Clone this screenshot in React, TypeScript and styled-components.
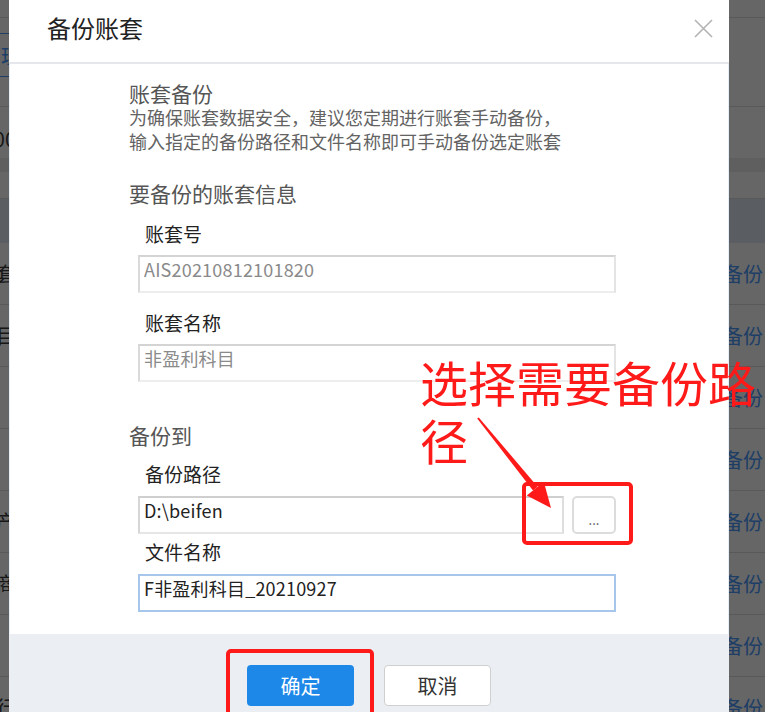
import React from "react";
import styled, { createGlobalStyle } from "styled-components";

const GlobalStyle = createGlobalStyle`
  html, body { margin: 0; padding: 0; overflow: hidden; }
  body {
    font-family: "Noto Sans CJK SC", "Noto Sans", sans-serif;
    background: #fff;
  }
  * { box-sizing: border-box; }
`;

/* ---------- background page ---------- */
const Page = styled.div`
  width: 765px;
  height: 712px;
  overflow: hidden;
  display: flex;
  flex-direction: column;
  background: #fff;
  color: #333;
  font-size: 20px;
`;

const TopStrip = styled.div`
  flex-shrink: 0;
  height: 18px;
  border-bottom: 1px solid #dedede;
`;

const NavRow = styled.div`
  flex-shrink: 0;
  height: 89px;
  padding-top: 15px;
  border-bottom: 1px solid #dedede;
  display: flex;
  align-items: flex-start;
`;

const Tab = styled.div`
  width: 40px;
  height: 44px;
  border-top: 1px solid #4b9bff;
  border-bottom: 1px solid #4b9bff;
  display: flex;
  align-items: center;
  justify-content: flex-end;
  overflow: hidden;
  color: #4b9bff;
  padding-right: 19px;
  white-space: nowrap;
`;

const InfoRow = styled.div`
  flex-shrink: 0;
  height: 51px;
  padding-top: 12px;
  display: flex;
  align-items: center;
`;

const Band = styled.div`
  flex-shrink: 0;
  height: 14px;
  background: #ededed;
`;

const Spacer = styled.div`
  flex-shrink: 0;
  height: 27px;
  border-bottom: 1px solid #dedede;
`;

const TableHead = styled.div`
  flex-shrink: 0;
  height: 44px;
  background: #e1e8f2;
`;

const TableRow = styled.div`
  flex-shrink: 0;
  height: 62px;
  border-bottom: 1px solid #dedede;
  display: flex;
  align-items: center;
  justify-content: space-between;
  padding-right: 2px;
`;

const Fragment = styled.div`
  width: 16px;
  display: flex;
  justify-content: flex-end;
  overflow: hidden;
  white-space: nowrap;
  color: #3a3a3a;
`;

const RowLink = styled.span`
  color: #4b9bff;
  font-size: 20px;
`;

const Overlay = styled.div`
  position: fixed;
  inset: 0;
  background: rgba(0, 0, 0, 0.6);
  z-index: 5;
`;

/* ---------- modal ---------- */
const Modal = styled.div`
  position: fixed;
  left: 9px;
  top: 0;
  width: 720px;
  background: #fff;
  z-index: 10;
  display: flex;
  flex-direction: column;
`;

const Header = styled.div`
  height: 64px;
  display: flex;
  align-items: center;
  justify-content: space-between;
  padding: 0 16px 6px 38px;
  border-bottom: 2px solid #e6e7ec;
`;

const Title = styled.h1`
  margin: 0;
  font-size: 24px;
  font-weight: 400;
  color: #222;
  line-height: 32px;
`;

const CloseButton = styled.button`
  width: 20px;
  height: 20px;
  padding: 0;
  border: none;
  background: none;
  display: flex;
  align-items: center;
  justify-content: center;
  cursor: pointer;
`;

const Body = styled.div`
  padding: 17px 110px 22px 119px;
  border-left: 1px solid #e6eef8;
  border-right: 1px solid #e6eef8;
  display: flex;
  flex-direction: column;
`;

const IntroTitle = styled.div`
  font-size: 21px;
  line-height: 24px;
  color: #555;
`;

const Description = styled.p`
  margin: 0;
  font-size: 18px;
  line-height: 24px;
  color: #636363;
`;

const SectionTitle = styled.div<{ $mt: number }>`
  margin-top: ${(p) => p.$mt}px;
  font-size: 21px;
  line-height: 28px;
  color: #555;
`;

const FieldLabel = styled.label<{ $mt: number }>`
  display: block;
  margin-top: ${(p) => p.$mt}px;
  padding-left: 16px;
  font-size: 19px;
  line-height: 26px;
  color: #222;
`;

type Tone = "disabled" | "normal" | "focus";

const TextBox = styled.input<{ $tone: Tone; $mt: number; $w?: number }>`
  display: block;
  flex-shrink: 0;
  margin: ${(p) => p.$mt}px 0 0 9px;
  width: ${(p) => p.$w ?? 478}px;
  height: 38px;
  padding: 0 4px 10px;
  font-family: inherit;
  font-size: 18px;
  letter-spacing: 0.2px;
  outline: none;
  background: #fff;
  border: 2px solid;
  border-radius: 0;
  color: ${(p) => (p.$tone === "disabled" ? "#8a8a8a" : "#222")};
  border-color: ${(p) =>
    p.$tone === "focus"
      ? "#a7c6ec"
      : p.$tone === "disabled"
      ? "#d4d4d4 #e4e4e4 #ededed #dadada"
      : "#cfcfcf #dedede #e6e6e6 #d6d6d6"};
`;

const PathRow = styled.div<{ $mt: number }>`
  margin-top: ${(p) => p.$mt}px;
  display: flex;
  gap: 8px;
`;

const BrowseButton = styled.button`
  flex-shrink: 0;
  width: 44px;
  height: 38px;
  padding: 8px 0 0;
  border: 2px solid #dcdcdc;
  border-radius: 5px;
  background: #fff;
  color: #555;
  font-family: inherit;
  font-size: 13px;
  line-height: 1;
  cursor: pointer;
`;

const Footer = styled.div`
  background: #ebeef2;
  padding: 31px 0 30px;
  display: flex;
  justify-content: center;
  gap: 30px;
`;

const ActionButton = styled.button<{ $primary?: boolean }>`
  width: 107px;
  height: 41px;
  border-radius: 4px;
  font-family: inherit;
  font-size: 20px;
  cursor: pointer;
  background: ${(p) => (p.$primary ? "#1e88e8" : "#fff")};
  color: ${(p) => (p.$primary ? "#fff" : "#333")};
  border: ${(p) => (p.$primary ? "none" : "1px solid #cfcfcf")};
`;

/* ---------- annotations ---------- */
const AnnotationLayer = styled.div`
  position: fixed;
  inset: 0;
  z-index: 20;
  pointer-events: none;
`;

const Callout = styled.div`
  position: absolute;
  left: 420px;
  top: 352px;
  width: 340px;
  font-size: 48px;
  line-height: 58px;
  color: #ff1a1a;
`;

const MarkSvg = styled.svg`
  position: absolute;
  left: 0;
  top: 0;
`;

const rows = ["账套", "科目", "", "", "资产", "商", "", "行"];

export default function App() {
  return (
    <>
      <GlobalStyle />
      <Page>
        <TopStrip />
        <NavRow>
          <Tab>账套管理</Tab>
        </NavRow>
        <InfoRow>
          <Fragment>1000</Fragment>
        </InfoRow>
        <Band />
        <Spacer />
        <TableHead />
        {rows.map((r, i) => (
          <TableRow key={i}>
            <Fragment>{r}</Fragment>
            <RowLink>备份</RowLink>
          </TableRow>
        ))}
      </Page>
      <Overlay />
      <Modal>
        <Header>
          <Title>备份账套</Title>
          <CloseButton aria-label="关闭">
            <svg width="19" height="19" viewBox="0 0 19 19">
              <path d="M1 1 L18 18 M18 1 L1 18" stroke="#b3b3b3" strokeWidth="1.6" fill="none" />
            </svg>
          </CloseButton>
        </Header>
        <Body>
          <IntroTitle>账套备份</IntroTitle>
          <Description>
            为确保账套数据安全，建议您定期进行账套手动备份，
            <br />
            输入指定的备份路径和文件名称即可手动备份选定账套
          </Description>

          <SectionTitle $mt={26}>要备份的账套信息</SectionTitle>
          <FieldLabel $mt={14}>账套号</FieldLabel>
          <TextBox $tone="disabled" $mt={8} readOnly defaultValue="AIS20210812101820" />
          <FieldLabel $mt={17}>账套名称</FieldLabel>
          <TextBox $tone="disabled" $mt={8} readOnly defaultValue="非盈利科目" />

          <SectionTitle $mt={39}>备份到</SectionTitle>
          <FieldLabel $mt={12}>备份路径</FieldLabel>
          <PathRow $mt={9}>
            <TextBox $tone="normal" $mt={0} $w={426} readOnly defaultValue="D:\beifen" />
            <BrowseButton>...</BrowseButton>
          </PathRow>
          <FieldLabel $mt={5}>文件名称</FieldLabel>
          <TextBox $tone="focus" $mt={9} readOnly defaultValue="F非盈利科目_20210927" />
        </Body>
        <Footer>
          <ActionButton $primary>确定</ActionButton>
          <ActionButton>取消</ActionButton>
        </Footer>
      </Modal>
      <AnnotationLayer>
        <Callout>选择需要备份路径</Callout>
        <MarkSvg width="765" height="712" viewBox="0 0 765 712">
          <polygon
            points="477.2,418.6 478.8,417.4 537.6,486.7 533,490.5"
            fill="#ff1a1a"
          />
          <polygon points="551,508 526.8,495.5 543.8,481.7" fill="#ff1a1a" />
          <rect x="524" y="484" width="107" height="59" rx="3" fill="none" stroke="#ff1a1a" strokeWidth="4" />
          <rect x="228" y="651" width="144" height="80" rx="3" fill="none" stroke="#ff1a1a" strokeWidth="4" />
        </MarkSvg>
      </AnnotationLayer>
    </>
  );
}
